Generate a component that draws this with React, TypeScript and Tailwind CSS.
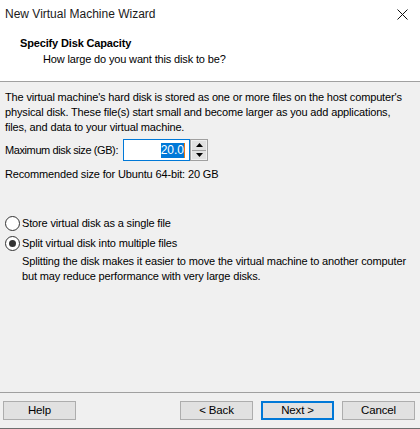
import React, { useState } from 'react'

export default function App() {
  const [split, setSplit] = useState(true)
  const size = '20.0'

  return (
    <div className="w-[420px] h-[429px] bg-[#f0f0f0] flex flex-col text-[11px] tracking-[-0.15px] text-black overflow-hidden font-['Liberation_Sans',Arial,sans-serif]">
      {/* title bar + header */}
      <div className="bg-white h-[81px] shrink-0">
        <div className="h-[28px] flex items-center justify-between pl-[5px] pr-[12px]">
          <span className="text-[12px] tracking-normal text-[#1a1a1a]">New Virtual Machine Wizard</span>
          <svg width="11" height="11" viewBox="0 0 11 11">
            <path d="M0.5 0.5 L10.5 10.5 M10.5 0.5 L0.5 10.5" stroke="#111" strokeWidth="1" />
          </svg>
        </div>
        <div className="pl-[20px] pt-[8px] leading-[15px]">
          <div className="font-bold">Specify Disk Capacity</div>
          <div className="pl-[23px] mt-px">How large do you want this disk to be?</div>
        </div>
      </div>
      <div className="h-px bg-[#a0a0a0] shrink-0" />

      <div className="flex-1 px-[5px] pt-[8px] leading-[15px]">
        <p className="whitespace-nowrap">
          The virtual machine's hard disk is stored as one or more files on the host computer's<br />
          physical disk. These file(s) start small and become larger as you add applications,<br />
          files, and data to your virtual machine.
        </p>

        <div className="flex items-center mt-[4px] h-[22px]">
          <span className="w-[118px] shrink-0 whitespace-nowrap tracking-[-0.4px]">Maximum disk size (GB):</span>
          <div className="w-[67px] h-[22px] bg-white border border-[#0078d7] flex items-center justify-end pr-[4px]">
            <span className="text-[12px] tracking-normal bg-[#0078d7] text-white leading-[15px]">{size}</span>
            <span className="w-px h-[15px] bg-[#e8790c]" />
          </div>
          <div className="flex flex-col h-[22px] w-[18px] border border-[#a0a0a0] bg-[#f0f0f0]">
            <button className="flex-1 flex items-center justify-center border-b border-[#a0a0a0] bg-[#e1e1e1] mx-px mt-px">
              <svg width="7" height="4" viewBox="0 0 7 4"><path d="M0 4 L3.5 0 L7 4 Z" fill="#000" /></svg>
            </button>
            <button className="flex-1 flex items-center justify-center bg-[#e1e1e1] mx-px mb-px">
              <svg width="7" height="4" viewBox="0 0 7 4"><path d="M0 0 L3.5 4 L7 0 Z" fill="#000" /></svg>
            </button>
          </div>
        </div>

        <div className="mt-[6px]">Recommended size for Ubuntu 64-bit: 20 GB</div>

        <div className="mt-[34px] flex flex-col gap-[5px]">
          <label className="flex items-center gap-[2px] cursor-default" onClick={() => setSplit(false)}>
            <Radio checked={!split} />
            <span>Store virtual disk as a single file</span>
          </label>
          <label className="flex items-center gap-[2px] cursor-default" onClick={() => setSplit(true)}>
            <Radio checked={split} />
            <span>Split virtual disk into multiple files</span>
          </label>
        </div>
        <p className="pl-[17px] mt-[3px] whitespace-nowrap">
          Splitting the disk makes it easier to move the virtual machine to another computer<br />
          but may reduce performance with very large disks.
        </p>
      </div>

      <div className="h-px bg-[#a0a0a0] shrink-0" />
      <div className="h-[35px] shrink-0 flex items-start pt-[8px] px-[3px]">
        <Btn>Help</Btn>
        <div className="flex-1" />
        <Btn>&lt; Back</Btn>
        <div className="w-[8px]" />
        <Btn primary>Next &gt;</Btn>
        <div className="w-[8px]" />
        <Btn>Cancel</Btn>
        <div className="w-[2px]" />
      </div>
      <div className="h-px bg-[#6e6e6e] shrink-0" />
    </div>
  )
}

function Radio({ checked }: { checked: boolean }) {
  return (
    <span className="w-[15px] h-[15px] rounded-full border border-[#333] bg-white flex items-center justify-center shrink-0">
      {checked && <span className="w-[7px] h-[7px] rounded-full bg-[#333]" />}
    </span>
  )
}

function Btn({ children, primary }: { children: React.ReactNode; primary?: boolean }) {
  return (
    <button
      className={
        primary
          ? 'w-[73px] h-[19px] bg-[#e1e1e1] border-2 border-[#0078d7] flex items-center justify-center text-[11.5px] font-["Liberation_Sans",Arial,sans-serif]'
          : 'w-[73px] h-[19px] bg-[#e1e1e1] border border-[#adadad] flex items-center justify-center text-[11.5px] font-["Liberation_Sans",Arial,sans-serif]'
      }
    >
      {children}
    </button>
  )
}
